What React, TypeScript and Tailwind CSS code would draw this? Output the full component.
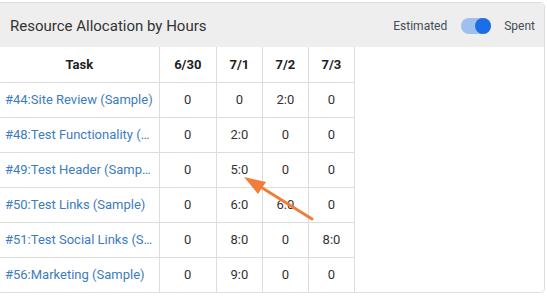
import React from 'react';

interface Row {
  task: string;
  hours: string[];
}

const days = ['6/30', '7/1', '7/2', '7/3'];

const rows: Row[] = [
  { task: '#44:Site Review (Sample)', hours: ['0', '0', '2:0', '0'] },
  { task: '#48:Test Functionality (Sample)', hours: ['0', '2:0', '0', '0'] },
  { task: '#49:Test Header (Sample)', hours: ['0', '5:0', '0', '0'] },
  { task: '#50:Test Links (Sample)', hours: ['0', '6:0', '6:0', '0'] },
  { task: '#51:Test Social Links (Sample)', hours: ['0', '8:0', '0', '8:0'] },
  { task: '#56:Marketing (Sample)', hours: ['0', '9:0', '0', '0'] },
];

const colWidths = ['w-[159px]', 'w-[57px]', 'w-[46px]', 'w-[46px]', 'w-[46px]'];

const App: React.FC = () => {
  return (
    <div className="w-[547px] h-[296px] bg-white pt-[2px] font-['Roboto',sans-serif] relative overflow-hidden">
      <div className="w-[545px] h-[291px] border-t border-r border-b border-[#dddddd] rounded-tr-[5px] rounded-br-[5px] overflow-hidden">
        <div className="h-[44px] bg-[#eeeeee] flex items-center justify-between pl-[10px] pr-[9px]">
          <h2 className="text-[15px] text-[#333333] font-normal pt-[2px]">Resource Allocation by Hours</h2>
          <div className="flex items-center text-[12px] text-[#444c55] pt-[1px]">
            <span>Estimated</span>
            <div className="ml-[14px] mr-[13px] w-[30px] h-[16px] rounded-full bg-[#9fc0ee] relative">
              <div className="absolute right-0 top-0 w-[16px] h-[16px] rounded-full bg-[#1a6fe6]" />
            </div>
            <span>Spent</span>
          </div>
        </div>
        <table className="border-collapse text-[13px] table-fixed w-[355px]">
          <thead>
            <tr className="h-[35px]">
              <th className={`${colWidths[0]} border-r border-b border-[#dddddd] font-bold text-[#222222]`}>Task</th>
              {days.map((d, i) => (
                <th key={d} className={`${colWidths[i + 1]} border-r border-b border-[#dddddd] font-bold text-[#222222]`}>{d}</th>
              ))}
            </tr>
          </thead>
          <tbody>
            {rows.map(r => (
              <tr key={r.task} className="h-[35px]">
                <td className="border-r border-b border-[#dddddd] pl-[5px] pr-[6px] text-[#3d7cc0] max-w-[159px] truncate">{r.task}</td>
                {r.hours.map((h, i) => (
                  <td key={i} className="border-r border-b border-[#dddddd] text-center text-[#333333]">{h}</td>
                ))}
              </tr>
            ))}
          </tbody>
        </table>
      </div>
      <svg className="absolute left-0 top-0 pointer-events-none" width="547" height="296">
        <line x1="312" y1="219" x2="256" y2="184" stroke="#f07d3a" strokeWidth="3" strokeLinecap="round" />
        <polygon points="244,177 266,182 258,194" fill="#f07d3a" />
      </svg>
    </div>
  );
};

export default App;
